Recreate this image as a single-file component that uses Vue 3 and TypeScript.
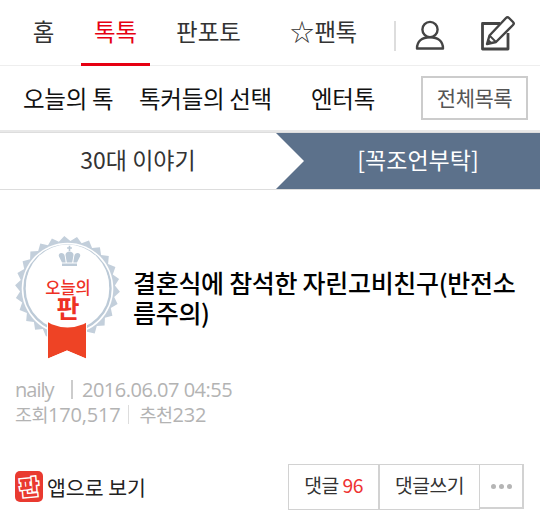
<script setup lang="ts">
const teeth = Array.from({ length: 26 }, (_, i) => i);
const pts = teeth
  .flatMap((i) => {
    const a = ((i + 0.25) / 26) * Math.PI * 2;
    const b = ((i + 0.75) / 26) * Math.PI * 2;
    return [
      `${(52.5 + 52.5 * Math.cos(a)).toFixed(1)},${(52.5 + 52.5 * Math.sin(a)).toFixed(1)}`,
      `${(52.5 + 47.5 * Math.cos(b)).toFixed(1)},${(52.5 + 47.5 * Math.sin(b)).toFixed(1)}`,
    ];
  })
  .join(" ");
</script>

<template>
  <div class="page">
    <nav class="gnb">
      <a class="gnb-item home">홈</a>
      <a class="gnb-item talk">톡톡</a>
      <a class="gnb-item pan">판포토</a>
      <a class="gnb-item fan"><span class="star">☆</span>팬톡</a>
      <span class="gnb-div"></span>
      <svg class="user" width="30" height="30" viewBox="0 0 30 30" fill="none" stroke="#444" stroke-width="2.400">
        <circle cx="15" cy="9.500" r="7.600" />
        <path d="M2 28.500c0-7 5-11.300 13-11.300s13 4.300 13 11.300z" stroke-linejoin="round" />
      </svg>
      <svg class="edit" width="34" height="36" viewBox="0 0 34 36" fill="none" stroke="#444">
        <path d="M19 8.500H1.500v25.500h25.500V18" stroke-width="2.800" stroke-linejoin="round" />
        <path d="M6 29l2.500-8.500L25 3c1-1 2-1 3 0l4 4c1 1 1 2 0 3L15 27z" stroke-width="2.400" stroke-linejoin="round" />
        <path d="M8.500 20.500l6.500 6.500" stroke-width="1.800" />
        <path d="M6 29l5-1.500-3.500-3.500z" fill="#444" stroke="none" />
      </svg>
    </nav>

    <div class="sub">
      <a class="sub-item a">오늘의 톡</a>
      <a class="sub-item b">톡커들의 선택</a>
      <a class="sub-item c">엔터톡</a>
      <a class="all">전체목록</a>
    </div>

    <div class="crumb">
      <div class="crumb-l">30대 이야기</div>
      <div class="crumb-r">[꼭조언부탁]</div>
    </div>

    <section class="head">
      <svg class="badge" width="105" height="123" viewBox="0 0 105 123">
        <polygon :points="pts" fill="#c3cfdb" />
        <circle cx="52.500" cy="52.500" r="45.800" fill="#fff" />
        <circle cx="52.500" cy="52.500" r="43" fill="none" stroke="#bccad7" stroke-width="2.400" />
        <path d="M33 86h38v36.500l-19-8-19 8z" fill="#ee4325" stroke="#fff" stroke-width="2" paint-order="stroke" />
        <path d="M33 122.500 52 114.500 71 122.500 71 124 33 124z" fill="#fff" />
        <circle cx="52.500" cy="50" r="41.500" fill="#fff" />
        <g fill="#bccad7">
          <path d="M47 26.500 44 20.500c-.8-1.800.4-3.500 2.200-3.500 2 0 3.200 1.300 3.500 3l1 6.500z" />
          <path d="M62 26.500 65 20.500c.8-1.800-.4-3.500-2.200-3.500-2 0-3.200 1.300-3.500 3l-1 6.500z" />
          <path d="M51.800 26.500 50.500 19c-.2-2 1.800-3.500 4-3.500s4.200 1.500 4 3.500l-1.300 7.500z" />
          <path d="M53.700 15v-2.200h-1.600v-1.500h1.600v-1.500h1.600v1.500h1.600v1.500h-1.600V15z" />
          <rect x="47" y="27.500" width="15" height="2.500" />
        </g>
        <text x="53" y="57.500" class="b1">오늘의</text>
        <text x="53" y="82" class="b2">판</text>
      </svg>
      <h1 class="title">결혼식에 참석한 자린고비친구(반전소<br />름주의)</h1>
    </section>

    <div class="meta">
      <div class="line l1"><span class="nick">naily</span><i class="bar"></i>2016.06.07 04:55</div>
      <div class="line"><span class="ko">조회</span>170,517<i class="bar2"></i><span class="ko">추천</span>232</div>
    </div>

    <footer class="foot">
      <div class="app">
        <span class="app-ico"><b>판</b></span>
        <span class="app-txt">앱으로 보기</span>
      </div>
      <div class="btns">
        <a class="btn b-1">댓글 <em>96</em></a>
        <a class="btn b-2">댓글쓰기</a>
        <a class="btn b-3"><i></i><i></i><i></i></a>
      </div>
    </footer>
  </div>
</template>

<style scoped>
.page {
  width: 540px;
  height: 526px;
  overflow: hidden;
  background: #fff;
  font-family: "Noto Sans CJK KR", "Open Sans", sans-serif;
  color: #333;
  font-weight: 400;
}
a { display: block; }
.gnb {
  height: 66px;
  box-sizing: border-box;
  border-bottom: 1px solid #eee;
  display: flex;
  align-items: center;
}
.gnb-item {
  font-size: 23.500px;
  line-height: 62px;
  height: 66px;
  text-align: center;
  box-sizing: border-box;
  color: #333;
  white-space: nowrap;
}
.home { width: 81px; padding-left: 6px; }
.talk { width: 69px; color: #e60012; border-bottom: 3px solid #e60012; }
.pan { width: 117px; }
.fan { width: 128px; text-align: left; padding-left: 23px; letter-spacing: -0.500px; }
.star { font-size: 24px; margin-right: 1px; }
.gnb-div { width: 2px; height: 30px; background: #ddd; margin-top: 6px; margin-left: -1px; }
.user { margin: 4px 0 0 19px; }
.edit { margin: 0 0 0 36px; }
.sub {
  height: 66px;
  box-sizing: border-box;
  border-bottom: 2px solid #e8e8e8;
  display: flex;
  align-items: center;
}
.sub-item { font-size: 23.500px; color: #111; white-space: nowrap; letter-spacing: -0.300px; }
.a { margin-left: 23px; width: 116px; }
.b { width: 172px; }
.c { width: 110px; }
.all {
  width: 107px;
  height: 44px;
  box-sizing: border-box;
  border: 2px solid #ccc;
  font-size: 21px;
  line-height: 38px;
  text-align: center;
  color: #555;
  letter-spacing: -0.500px;
}
.crumb {
  height: 58px;
  box-sizing: border-box;
  border-top: 1px solid #ddd;
  border-bottom: 1px solid #ddd;
  display: flex;
  font-size: 23px;
}
.crumb-l {
  width: 276px;
  text-align: center;
  line-height: 53px;
  color: #333;
}
.crumb-r {
  flex: 1;
  background: #5c718b;
  color: #fff;
  text-align: center;
  line-height: 53px;
  padding-left: 20px;
  clip-path: polygon(0 0, 100% 0, 100% 100%, 0 100%, 28px 50%);
}
.head {
  display: flex;
  margin-top: 46px;
  margin-left: 15px;
  height: 123px;
}
.badge { flex: none; }
.b1 { font-size: 16.500px; font-weight: 500; fill: #ee3124; text-anchor: middle; }
.b2 { font-size: 25px; font-weight: 700; fill: #ee3124; text-anchor: middle; }
.title {
  margin: 31px 0 0 13px;
  font-size: 25px;
  line-height: 30px;
  font-weight: 500;
  color: #000;
  white-space: nowrap;
  letter-spacing: -0.300px;
}
.meta {
  margin: 18px 0 0 15px;
  font-size: 20px;
  line-height: 25px;
  color: #b3b3b3;
  font-family: "Open Sans", "Noto Sans CJK KR", sans-serif;
}
.line { display: flex; align-items: center; white-space: nowrap; letter-spacing: -0.200px; }
.l1 { letter-spacing: -0.500px; }
.ko { font-size: 18.500px; letter-spacing: -0.500px; }
.nick { width: 56px; letter-spacing: -1px; }
.bar { width: 2px; height: 19px; background: #ccc; margin-right: 9px; }
.bar2 { width: 1px; height: 19px; background: #ddd; margin: 0 10px 0 8px; }
.foot {
  margin-top: 37px;
  display: flex;
  padding-left: 15px;
}
.app { display: flex; align-items: center; width: 273px; height: 45px; }
.app-ico {
  width: 28px;
  height: 31px;
  border-radius: 5px;
  background: #e93a30;
  font-size: 21px;
  line-height: 30px;
  text-align: center;
  overflow: hidden;
  flex: none;
}
.app-ico b {
  display: block;
  font-weight: 900;
  color: #e93a30;
  -webkit-text-stroke: 3px #fff;
  paint-order: stroke fill;
  transform: rotate(-5deg);
}
.app-txt { font-size: 20.500px; color: #222; margin-left: 4px; white-space: nowrap; }
.btns { display: flex; align-items: flex-start; }
.btn {
  box-sizing: border-box;
  height: 46px;
  border: 1px solid #d2d2d2;
  font-size: 19.300px;
  line-height: 40px;
  text-align: center;
  color: #333;
  letter-spacing: -0.500px;
  white-space: nowrap;
}
.btn em { font-style: normal; color: #ee3333; }
.b-1 { width: 92px; border-right-width: 2px; }
.b-2 { width: 100px; border-left: 0; }
.b-3 {
  width: 44px;
  height: 45px;
  border-left: 0;
  border-right-width: 2px;
  border-bottom-width: 2px;
  display: flex;
  align-items: center;
  justify-content: center;
  gap: 3px;
}
.b-3 i { width: 5px; height: 5px; border-radius: 50%; background: #b5b5b5; }
</style>
